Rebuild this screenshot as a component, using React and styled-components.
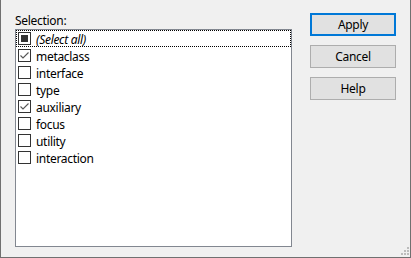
import React from "react";
import styled, { createGlobalStyle } from "styled-components";

const Global = createGlobalStyle`
  html, body { margin: 0; padding: 0; background: #f0f0f0; }
  body { font-family: "Noto Sans", "Open Sans", sans-serif; font-size: 12px; color: #000; }
  * { box-sizing: border-box; }
`;

const Window = styled.div`
  position: relative;
  width: 411px;
  height: 258px;
  background: #f0f0f0;
  border-left: 1px solid #707070;
  border-right: 1px solid #707070;
  border-bottom: 1px solid #707070;
  display: flex;
  padding: 13px 14px 10px 14px;
  gap: 18px;
`;

const LeftCol = styled.div`
  width: 277px;
  display: flex;
  flex-direction: column;
`;

const Label = styled.div`
  font-size: 12px;
  letter-spacing: -0.3px;
  line-height: 15px;
  height: 16px;
`;

const ListBox = styled.div`
  height: 218px;
  background: #fff;
  border: 1px solid #828790;
  display: flex;
  flex-direction: column;
`;

const Row = styled.div`
  height: 17px;
  display: flex;
  align-items: flex-start;
  gap: 5px;
  padding-left: 1px;
  font-size: 12px;
  letter-spacing: -0.3px;
  font-style: ${(p) => (p.$italic ? "italic" : "normal")};
  border: 1px dotted ${(p) => (p.$focus ? "#000" : "transparent")};
`;

const Box = styled.span`
  width: 13px;
  height: 13px;
  margin-top: 1px;
  border: 1px solid #333;
  background: #fff;
  display: flex;
  align-items: center;
  justify-content: center;
  flex: none;
`;

const Text = styled.span`
  line-height: 15px;
  padding-top: 1px;
  white-space: nowrap;
`;

const Fill = styled.span`
  width: 7px;
  height: 7px;
  background: #333;
`;

const RightCol = styled.div`
  display: flex;
  flex-direction: column;
  gap: 9px;
`;

const Button = styled.button`
  width: 86px;
  height: 23px;
  background: #e1e1e1;
  border: ${(p) => (p.$default ? "2px solid #0078d7" : "1px solid #adadad")};
  font-family: "Noto Sans", "Open Sans", sans-serif;
  font-size: 12px;
  letter-spacing: -0.3px;
  color: #000;
  padding: 0;
  margin: 0;
`;

const Grip = styled.svg`
  position: absolute;
  right: 1px;
  bottom: 2px;
`;

const Check = () => (
  <svg width="11" height="11" viewBox="0 0 11 11">
    <path d="M1.5 5.5 L4 8 L9.5 2.5" fill="none" stroke="#555" strokeWidth="1.1" />
  </svg>
);

const items = [
  { label: "(Select all)", state: "partial", italic: true, focus: true },
  { label: "metaclass", state: "checked" },
  { label: "interface" },
  { label: "type" },
  { label: "auxiliary", state: "checked" },
  { label: "focus" },
  { label: "utility" },
  { label: "interaction" },
];

export default function App() {
  return (
    <>
      <Global />
      <Window>
        <LeftCol>
          <Label>Selection:</Label>
          <ListBox>
            {items.map((it) => (
              <Row key={it.label} $italic={it.italic} $focus={it.focus}>
                <Box>
                  {it.state === "partial" && <Fill />}
                  {it.state === "checked" && <Check />}
                </Box>
                <Text>{it.label}</Text>
              </Row>
            ))}
          </ListBox>
        </LeftCol>
        <RightCol>
          <Button $default>Apply</Button>
          <Button>Cancel</Button>
          <Button>Help</Button>
        </RightCol>
        <Grip width="9" height="9" viewBox="0 0 9 9">
          <rect x="7" y="1" width="2" height="2" fill="#bcbcbc" />
          <rect x="4" y="4" width="2" height="2" fill="#bcbcbc" />
          <rect x="7" y="4" width="2" height="2" fill="#bcbcbc" />
          <rect x="1" y="7" width="2" height="2" fill="#bcbcbc" />
          <rect x="4" y="7" width="2" height="2" fill="#bcbcbc" />
          <rect x="7" y="7" width="2" height="2" fill="#bcbcbc" />
        </Grip>
      </Window>
    </>
  );
}
